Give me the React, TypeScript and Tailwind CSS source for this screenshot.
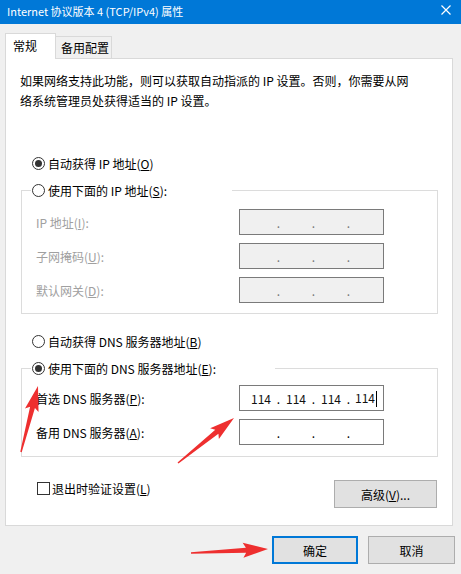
const font = { fontFamily: '"Noto Sans CJK SC", "Noto Sans", sans-serif' };

type Pt = [number, number];

// tapered red arrow like a screenshot-tool annotation
function arrowPoints(tail: Pt, tip: Pt, head = 20, headW = 15, neckW = 5, tailW = 1.5) {
  const dx = tip[0] - tail[0];
  const dy = tip[1] - tail[1];
  const len = Math.hypot(dx, dy);
  const ux = dx / len;
  const uy = dy / len;
  const nx = -uy;
  const ny = ux;
  const neck: Pt = [tip[0] - ux * head, tip[1] - uy * head];
  const barb: Pt = [tip[0] - ux * (head + 3), tip[1] - uy * (head + 3)];
  const p = (b: Pt, w: number): string => `${b[0] + nx * w},${b[1] + ny * w}`;
  return [
    p(tail, tailW / 2),
    p(neck, neckW / 2),
    p(barb, headW / 2),
    `${tip[0]},${tip[1]}`,
    p(barb, -headW / 2),
    p(neck, -neckW / 2),
    p(tail, -tailW / 2),
  ].join(" ");
}

const Radio = ({ checked }: { checked?: boolean }) => (
  <span className="w-[13px] h-[13px] rounded-full border border-[#333] bg-white flex items-center justify-center shrink-0">
    {checked && <span className="w-[7px] h-[7px] rounded-full bg-[#333]" />}
  </span>
);

const IpBox = ({ value, disabled, cursor }: { value?: string[]; disabled?: boolean; cursor?: boolean }) => {
  const nums = value ?? ["", "", "", ""];
  const dot = disabled ? "text-[#777]" : "text-black";
  return (
    <div
      className={`w-[145px] h-[26px] border border-[#7a7a7a] flex items-center pl-[7px] leading-[17px] text-[12px] ${
        disabled ? "bg-[#f0f0f0]" : "bg-white"
      }`}
    >
      {nums.map((n, i) => (
        <div key={i} className="flex">
          <span className="w-[28px] text-center text-[#111]">
            {n}
            {cursor && i === 3 && <span className="inline-block w-px h-[16px] bg-black align-middle ml-[1px] -mt-[2px]" />}
          </span>
          {i < 3 && <span className={`w-[7px] text-center ${dot}`}>.</span>}
        </div>
      ))}
    </div>
  );
};

export default function App() {
  return (
    <div className="relative w-[461px] h-[574px] bg-[#f0f0f0] overflow-hidden text-[12px] leading-[17px] text-black" style={font}>
      {/* title bar */}
      <div className="h-[24px] bg-[#0078d7] flex items-center justify-between pl-[7px] pr-[10px] text-white">
        <span className="-mt-[2px] text-[11px]">Internet 协议版本 4 (TCP/IPv4) 属性</span>
        <svg width="10" height="10" viewBox="0 0 10 10" className="-mt-[4px]">
          <path d="M0.5 0.5L9.5 9.5M9.5 0.5L0.5 9.5" stroke="white" strokeWidth="1.2" />
        </svg>
      </div>

      {/* tabs */}
      <div className="mt-[9px] pl-[5px] flex items-end">
        <div className="relative z-10 w-[51px] h-[26px] -mb-px bg-white border border-b-0 border-[#d9d9d9] pl-[7px] pt-[3px]">
          常规
        </div>
        <div className="w-[56px] h-[22px] bg-[#f0f0f0] border-t border-r border-[#d9d9d9] pl-[5px] flex items-center">
          备用配置
        </div>
      </div>

      {/* panel */}
      <div className="ml-[5px] w-[448px] h-[468px] bg-white border border-[#d9d9d9] pl-[15px] pr-[14px] pt-[12px]">
        <p className="leading-[20px] whitespace-nowrap -ml-px">
          如果网络支持此功能，则可以获取自动指派的 IP 设置。否则，你需要从网
          <br />
          络系统管理员处获得适当的 IP 设置。
        </p>

        <div className="mt-[44px] h-[17px] pl-[11px] flex items-center gap-[3px]">
          <Radio checked />
          <span>
            自动获得 IP 地址(<u>O</u>)
          </span>
        </div>

        <div className="mt-[18px] border border-[#dcdcdc] pb-[10px]">
          <div className="-mt-[9px] ml-[9px] w-[201px] h-[17px] bg-white pl-px flex items-center gap-[3px]">
            <Radio />
            <span>
              使用下面的 IP 地址(<u>S</u>):
            </span>
          </div>
          <div className="mt-[10px] flex flex-col gap-[8px] text-[#a0a0a0]">
            {[
              ["IP 地址(", "I", "):"],
              ["子网掩码(", "U", "):"],
              ["默认网关(", "D", "):"],
            ].map(([a, k, b]) => (
              <div key={a} className="flex items-center pl-[14px]">
                <span className="w-[203px]">
                  {a}
                  <u>{k}</u>
                  {b}
                </span>
                <IpBox disabled />
              </div>
            ))}
          </div>
        </div>

        <div className="mt-[19px] h-[17px] pl-[11px] flex items-center gap-[3px]">
          <Radio />
          <span>
            自动获得 DNS 服务器地址(<u>B</u>)
          </span>
        </div>

        <div className="mt-[18px] border border-[#dcdcdc] pb-[11px]">
          <div className="-mt-[9px] ml-[9px] w-[244px] h-[17px] bg-white pl-px flex items-center gap-[3px]">
            <Radio checked />
            <span>
              使用下面的 DNS 服务器地址(<u>E</u>):
            </span>
          </div>
          <div className="mt-[8px] flex flex-col gap-[8px]">
            <div className="flex items-center pl-[14px]">
              <span className="w-[203px]">
                首选 DNS 服务器(<u>P</u>):
              </span>
              <IpBox value={["114", "114", "114", "114"]} cursor />
            </div>
            <div className="flex items-center pl-[14px]">
              <span className="w-[203px]">
                备用 DNS 服务器(<u>A</u>):
              </span>
              <IpBox />
            </div>
          </div>
        </div>

        <div className="mt-[23px] flex justify-between items-start">
          <label className="h-[17px] pl-[16px] flex items-center gap-[2px]">
            <span className="w-[13px] h-[13px] border border-[#333] bg-white" />
            <span>
              退出时验证设置(<u>L</u>)
            </span>
          </label>
          <button className="mr-px w-[103px] h-[28px] bg-[#e1e1e1] border border-[#adadad] flex items-center justify-center">
            高级(<u>V</u>)...
          </button>
        </div>
      </div>

      {/* dialog buttons */}
      <div className="mt-[10px] pr-[6px] flex justify-end gap-[10px]">
        <button className="w-[86px] h-[28px] bg-[#e1e1e1] border-2 border-[#0078d7] flex items-center justify-center">
          确定
        </button>
        <button className="w-[87px] h-[28px] bg-[#e1e1e1] border border-[#adadad] flex items-center justify-center">
          取消
        </button>
      </div>

      {/* annotation arrows */}
      <svg className="absolute inset-0 pointer-events-none" width="461" height="574" viewBox="0 0 461 574">
        <g fill="#ee2f2f">
          <polygon points={arrowPoints([21, 452], [38, 386], 22, 14, 5, 1.5)} />
          <polygon points={arrowPoints([178, 463], [234, 418], 22, 14, 5, 1.5)} />
          <polygon points={arrowPoints([191, 553], [268, 549], 22, 15, 5, 1.5)} />
        </g>
      </svg>
    </div>
  );
}
